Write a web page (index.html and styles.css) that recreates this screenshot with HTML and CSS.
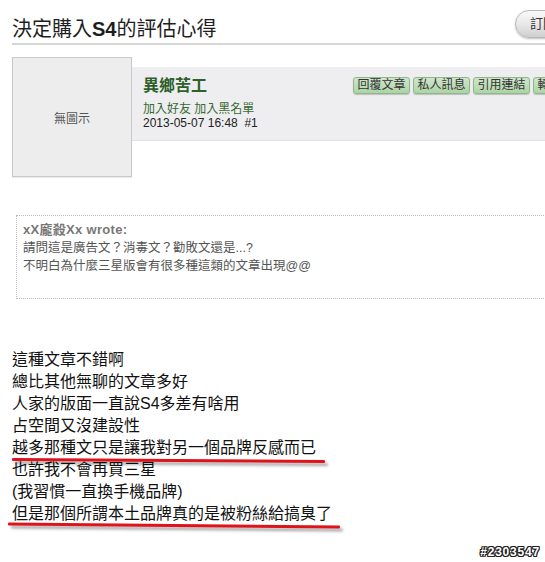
FILE: index.html
```html
<!DOCTYPE html>
<html lang="zh-Hant">
<head>
<meta charset="utf-8">
<title>決定購入S4的評估心得</title>
<link rel="stylesheet" href="styles.css">
</head>
<body>
<div class="page">
  <div class="title-row">
    <h1 class="title">決定購入<b>S4</b>的評估心得</h1>
    <a class="subscribe">訂閱</a>
  </div>

  <div class="post-head">
    <div class="avatar">無圖示</div>
    <div class="band">
      <div class="author">
        <div class="name">異鄉苦工</div>
        <div class="links"><a>加入好友</a> <a>加入黑名單</a></div>
        <div class="date">2013-05-07 16:48 &nbsp;#1</div>
      </div>
      <div class="actions">
        <a class="btn">回覆文章</a>
        <a class="btn">私人訊息</a>
        <a class="btn">引用連結</a>
        <a class="btn">轉寄好友</a>
      </div>
    </div>
  </div>

  <div class="quote">
    <div class="quote-title">xX龐殺Xx wrote:</div>
    <div>請問這是廣告文？消毒文？勸敗文還是...?</div>
    <div>不明白為什麼三星版會有很多種這類的文章出現@@</div>
  </div>

  <div class="content">
    <div class="line">這種文章不錯啊</div>
    <div class="line">總比其他無聊的文章多好</div>
    <div class="line">人家的版面一直說S4多差有啥用</div>
    <div class="line">占空間又沒建設性</div>
    <div class="line mark mark-a">越多那種文只是讓我對另一個品牌反感而已</div>
    <div class="line">也許我不會再買三星</div>
    <div class="line">(我習慣一直換手機品牌)</div>
    <div class="line mark mark-b">但是那個所謂本土品牌真的是被粉絲給搞臭了</div>
  </div>
</div>
<div class="watermark">#2303547</div>
</body>
</html>
```

FILE: styles.css
```css
html, body {
  margin: 0;
  padding: 0;
  background: #ffffff;
}

body {
  width: 545px;
  height: 562px;
  overflow: hidden;
  position: relative;
  font-family: "Liberation Sans", "Noto Sans CJK TC", sans-serif;
  color: #222;
}

.page {
  width: 586px;
  padding-left: 12px;
}

/* ---------- title ---------- */
.title-row {
  display: flex;
  align-items: flex-start;
  justify-content: space-between;
  padding: 10px 0 0;
  border-bottom: 2px solid #d6d6d6;
}

.title {
  margin: 0;
  padding-top: 5px;
  font-size: 20px;
  line-height: 28px;
  font-weight: normal;
  color: #1e1e1e;
}

.title b {
  font-weight: bold;
}

.subscribe {
  box-sizing: border-box;
  width: 95px;
  height: 28px;
  padding-left: 14px;
  margin-right: -12px;
  border: 1px solid #b8b8b8;
  border-radius: 14px;
  background: linear-gradient(#fafafa, #e6e6e6 55%, #cfcfcf);
  box-shadow: 0 1px 2px rgba(0, 0, 0, 0.25);
  font-size: 13px;
  line-height: 26px;
  color: #333;
}

/* ---------- post head ---------- */
.post-head {
  display: flex;
  align-items: flex-start;
  margin-top: 12px;
}

.avatar {
  box-sizing: border-box;
  flex: none;
  width: 120px;
  height: 120px;
  border: 1px solid #c9c9c9;
  background: #ededed;
  display: flex;
  align-items: center;
  justify-content: center;
  font-size: 12px;
  color: #555;
  box-shadow: 0 1px 1px rgba(0, 0, 0, 0.08);
}

.band {
  box-sizing: border-box;
  flex: 1;
  display: flex;
  align-items: flex-start;
  height: 74px;
  margin-top: 10px;
  padding: 9px 8px 0 11px;
  background: #eeeef0;
  border-bottom: 1px solid #e2e2e2;
}

.author {
  flex: none;
}

.name {
  font-size: 16px;
  line-height: 20px;
  font-weight: bold;
  color: #2f5f2b;
}

.links {
  margin-top: 6px;
  font-size: 12px;
  line-height: 14px;
  color: #356a30;
}

.date {
  font-size: 12px;
  line-height: 14px;
  color: #222;
}

.actions {
  display: flex;
  gap: 3px;
  margin-left: auto;
  margin-top: 1px;
}

.btn {
  box-sizing: border-box;
  width: 57px;
  height: 17px;
  border: 1px solid #8db889;
  border-radius: 3px;
  background: linear-gradient(#cfe6cb, #add3a7);
  box-shadow: 0 1px 1px rgba(0, 0, 0, 0.2);
  font-size: 12px;
  line-height: 15px;
  text-align: center;
  color: #333;
}

/* ---------- quote ---------- */
.quote {
  margin-top: 38px;
  margin-left: 4px;
  padding: 5px 6px 23px;
  border: 1px dotted #b9b9b9;
  border-right: none;
  font-size: 12.5px;
  line-height: 18px;
  color: #555;
}

.quote-title {
  font-size: 13px;
  font-weight: bold;
  color: #777;
  letter-spacing: 0.3px;
}

/* ---------- content ---------- */
.content {
  margin-top: 50px;
  font-family: "Liberation Sans", "Noto Sans CJK TC", sans-serif;
  font-size: 16px;
  line-height: 22px;
  color: #111;
}

.mark {
  position: relative;
  width: fit-content;
}

.mark::after {
  content: "";
  position: absolute;
  height: 3px;
  background: #e0121a;
  border-radius: 1px;
  box-shadow: 3px 3px 3px rgba(0, 0, 0, 0.35);
}

.mark-a::after {
  left: 0;
  right: -9px;
  bottom: -3px;
  transform: rotate(0.35deg);
}

.mark-b::after {
  left: -4px;
  right: -8px;
  bottom: -2px;
  transform: rotate(0.5deg);
}

/* ---------- watermark ---------- */
.watermark {
  position: absolute;
  right: 5px;
  top: 545px;
  font-family: "Liberation Sans", sans-serif;
  font-size: 12px;
  font-weight: bold;
  line-height: 14px;
  letter-spacing: 0.8px;
  color: #ffffff;
  text-shadow: 1px 0 0 #222, -1px 0 0 #222, 0 1px 0 #222, 0 -1px 0 #222,
    1px 1px 0 #222, -1px -1px 0 #222, 1px -1px 0 #222, -1px 1px 0 #222;
}
```
